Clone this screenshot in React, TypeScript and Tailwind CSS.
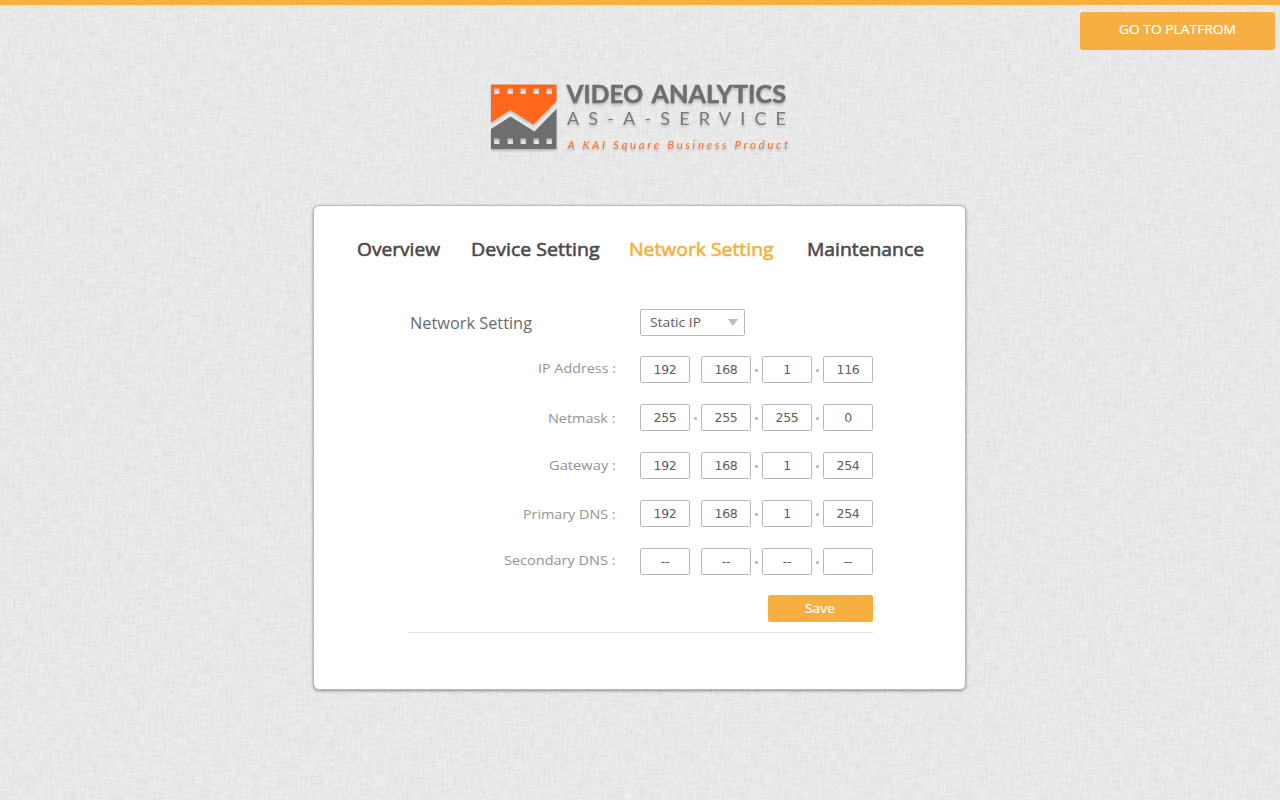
import React from "react";

const tabs = [
  { label: "Overview", left: "ml-[43px]", width: 83 },
  { label: "Device Setting", left: "ml-[31px]", width: 128.5 },
  { label: "Network Setting", left: "ml-[29.5px]", width: 144.5, active: true },
  { label: "Maintenance", left: "ml-[33px]", width: 117 },
];

const rows = [
  { label: "IP Address :", width: 78, values: ["192", "168", "1", "116"], firstDot: false, shift: "pb-px" },
  { label: "Netmask :", width: 67.5, values: ["255", "255", "255", "0"], firstDot: true, shift: "pt-[3px]" },
  { label: "Gateway :", width: 67, values: ["192", "168", "1", "254"], firstDot: false, shift: "pt-px" },
  { label: "Primary DNS :", width: 92.5, values: ["192", "168", "1", "254"], firstDot: false, shift: "pt-[3px]" },
  { label: "Secondary DNS :", width: 111.5, values: ["--", "--", "--", "--"], firstDot: false, shift: "pb-px" },
];

function Linen() {
  return (
    <svg className="absolute inset-0 -z-10 h-full w-full" aria-hidden="true">
      <defs>
        <filter id="warp" x="0" y="0" width="100%" height="100%" colorInterpolationFilters="sRGB">
          <feTurbulence type="fractalNoise" baseFrequency="0.45 0.08" numOctaves="2" seed="4" />
          <feColorMatrix values="0 0 0 0 0.5  0 0 0 0 0.5  0 0 0 0 0.5  0.17 0 0 0 -0.06" />
        </filter>
        <filter id="weft" x="0" y="0" width="100%" height="100%" colorInterpolationFilters="sRGB">
          <feTurbulence type="fractalNoise" baseFrequency="0.08 0.45" numOctaves="2" seed="9" />
          <feColorMatrix values="0 0 0 0 0.5  0 0 0 0 0.5  0 0 0 0 0.5  0.17 0 0 0 -0.06" />
        </filter>
      </defs>
      <rect width="100%" height="100%" fill="#eeeeee" />
      <rect width="100%" height="100%" filter="url(#warp)" />
      <rect width="100%" height="100%" filter="url(#weft)" />
    </svg>
  );
}

function Logo() {
  const holes = [3.5, 17, 30, 43, 56];
  return (
    <svg
      className="h-[90px] w-[310px] [filter:drop-shadow(0_2px_1px_rgba(0,0,0,0.2))]"
      viewBox="0 -10 310 90"
      role="img"
      aria-label="Video Analytics as a Service"
    >
      <mask id="holes" maskUnits="userSpaceOnUse" x="0" y="0" width="70" height="80">
        <rect width="70" height="80" fill="#fff" />
        {holes.map((x) => (
          <g key={x} fill="#000">
            <rect x={x + 0.5} y="8.500" width="5.500" height="5.500" />
            <rect x={x + 0.5} y="58.500" width="5.500" height="5.500" />
          </g>
        ))}
      </mask>
      <g mask="url(#holes)">
        <path d="M1 4.500H66.500V21L43.500 44.500L20.500 30L1 42.500Z" fill="#ff671b" />
        <path d="M1 49L20.500 36.500L44.500 51.500L66.500 29V69H1Z" fill="#6d6e70" />
      </g>
      <g fontFamily="Lato, sans-serif">
        <g fontSize="25.500" fontWeight="700" fill="#6d6e70" stroke="#6d6e70" strokeWidth="0.500">
          <text x="76.500" y="23" textLength="76.500" lengthAdjust="spacingAndGlyphs">VIDEO</text>
          <text x="161.500" y="23" textLength="134.500" lengthAdjust="spacingAndGlyphs">ANALYTICS</text>
        </g>
        <text x="77" y="45" fontSize="18" fontWeight="400" fill="#77787a" textLength="219" lengthAdjust="spacing">AS-A-SERVICE</text>
        <text x="77.500" y="69" fontSize="11.500" fontStyle="italic" fill="#f8702c" textLength="220.500" lengthAdjust="spacing">A KAI Square Business Product</text>
      </g>
    </svg>
  );
}

function Label({ text, width, size, color, stroke = 0 }: { text: string; width: number; size: number; color: string; stroke?: number }) {
  return (
    <svg className="block shrink-0 overflow-visible" width={width} height={size + 8} role="img" aria-label={text}>
      <text x="0" y={size + 1} fontSize={size} fill={color} stroke={color} strokeWidth={stroke} textLength={width} lengthAdjust="spacingAndGlyphs">
        {text}
      </text>
    </svg>
  );
}

export default function App() {
  return (
    <div className="relative isolate flex h-[800px] w-full flex-col items-center overflow-hidden font-['Open_Sans',sans-serif]">
      <Linen />
      <div className="h-[5px] w-full shrink-0 bg-[#f7af41]" />
      <header className="flex w-full shrink-0 justify-end pt-[7px] pr-[5px]">
        <button className="flex h-[38px] w-[195px] items-start justify-center rounded-[3px] bg-[#f7af41] pt-[8px] pr-px">
          <Label text="GO TO PLATFROM" width={117} size={13} color="#fff" stroke={0.2} />
        </button>
      </header>
      <div className="mt-[20px] mr-[-10px] flex h-[90px] w-[310px] shrink-0">
        <Logo />
      </div>
      <main className="mt-[45px] mr-px flex h-[485px] w-[653px] shrink-0 flex-col rounded-[6px] border border-[#b9bab9] bg-white shadow-[0_1px_3px_rgba(0,0,0,0.4)]">
        <nav className="mt-[30px] flex h-[26px]">
          {tabs.map((t) => (
            <a key={t.label} className={t.left}>
              <Label text={t.label} width={t.width} size={18.5} stroke={0.6} color={t.active ? "#f7af41" : "#4b4b4b"} />
            </a>
          ))}
        </nav>
        <section className="mt-[47px] ml-[94px] flex h-[324px] w-[465px] flex-col border-b border-[#e5e5e5]">
          <div className="flex h-[27px] shrink-0 items-center">
            <div className="w-[232px] pt-[3px] pl-[2px]">
              <Label text="Network Setting" width={122} size={15.5} color="#6b6b6b" />
            </div>
            <button className="flex h-[27px] w-[105px] items-center justify-between rounded-[2px] border border-[#b9b9b9] pr-[6px] pl-[9px]">
              <span className="pt-px">
                <Label text="Static IP" width={51} size={12.5} color="#5d5d5d" />
              </span>
              <svg width="10" height="7" aria-hidden="true"><path d="M0 0H10L5 7Z" fill="#bababa" /></svg>
            </button>
          </div>
          <div className="mt-[20px] flex flex-col gap-[21px]">
            {rows.map((r) => (
              <div key={r.label} className="flex h-[27px] items-center">
                <div className={`mr-[24.5px] flex h-[27px] w-[207.5px] items-center justify-end ${r.shift}`}>
                  <Label text={r.label} width={r.width} size={13.5} color="#939393" />
                </div>
                {r.values.map((v, i) => (
                  <React.Fragment key={i}>
                    {i > 0 && (
                      <span className="flex w-[11px] justify-center pt-[2px]">
                        {(i > 1 || r.firstDot) && <i className="h-[3px] w-[3px] rounded-[1px] bg-[#bcbcbc]" />}
                      </span>
                    )}
                    <span className="flex h-[27px] w-[50px] items-center justify-center rounded-[2px] border border-[#b9b9b9] pt-[2px] font-['DejaVu_Sans',sans-serif] text-[12.5px] tracking-[-0.3px] text-[#5d5d5d]">
                      {v}
                    </span>
                  </React.Fragment>
                ))}
              </div>
            ))}
          </div>
          <button className="mt-[20px] flex h-[27px] w-[105px] shrink-0 items-center justify-center self-end rounded-[2px] bg-[#f7af41] pt-px pr-px">
            <Label text="Save" width={30} size={12.5} color="#fff" stroke={0.2} />
          </button>
        </section>
      </main>
    </div>
  );
}
